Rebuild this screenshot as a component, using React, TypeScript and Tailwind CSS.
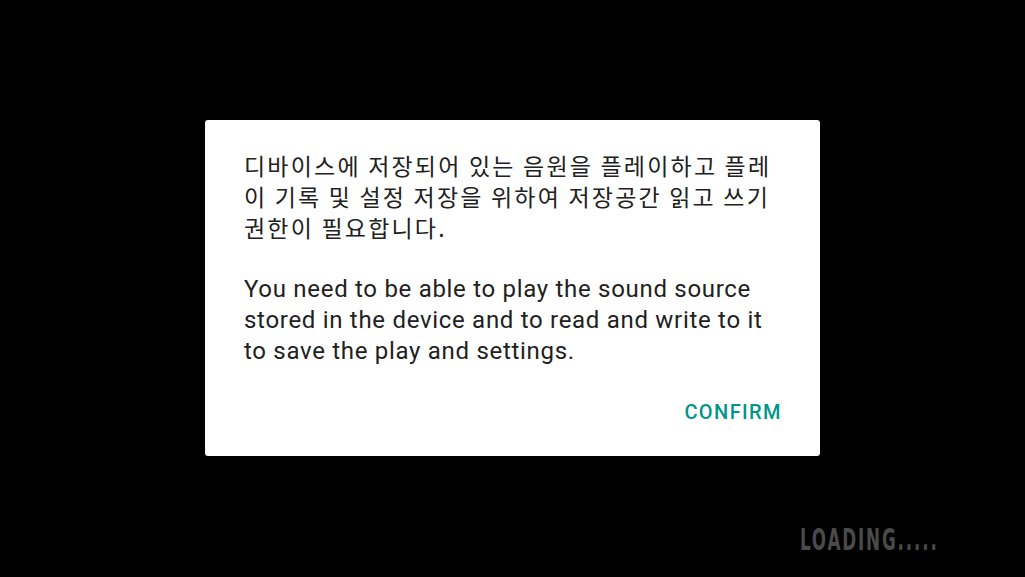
export default function App() {
  return (
    <div className="w-[1025px] h-[577px] bg-black relative overflow-hidden" style={{ fontFamily: 'Roboto, "Noto Sans CJK KR", sans-serif' }}>
      <div className="absolute left-[205px] top-[120px] w-[615px] h-[336px] bg-white rounded-[3px] flex flex-col">
        <div className="pt-[30px] pl-[39px] pr-[20px] leading-[31px] text-[#212121]">
          <div className="text-[23px] tracking-[2.2px]" style={{ fontFamily: '"Noto Sans CJK KR", sans-serif' }}>
            <div className="whitespace-nowrap">디바이스에 저장되어 있는 음원을 플레이하고 플레</div>
            <div className="whitespace-nowrap">이 기록 및 설정 저장을 위하여 저장공간 읽고 쓰기</div>
            <div className="whitespace-nowrap">권한이 필요합니다.</div>
          </div>
          <div className="h-[31px]" />
          <div className="text-[24px] tracking-[0.7px]">
            <div className="whitespace-nowrap">You need to be able to play the sound source</div>
            <div className="whitespace-nowrap">stored in the device and to read and write to it</div>
            <div className="whitespace-nowrap">to save the play and settings.</div>
          </div>
        </div>
        <div className="flex justify-end pr-[38px] mt-[35px]">
          <span className="text-[20px] font-medium text-[#009688] leading-none tracking-[1.4px]">CONFIRM</span>
        </div>
      </div>
      <div className="absolute left-[800px] top-[525px] leading-none">
        <span className="inline-block origin-left scale-x-[0.62] text-[30px] font-bold text-[#4a4a4a] tracking-[3px] whitespace-nowrap" style={{ fontFamily: '"DejaVu Sans Condensed", sans-serif' }}>LOADING.....</span>
      </div>
    </div>
  );
}
